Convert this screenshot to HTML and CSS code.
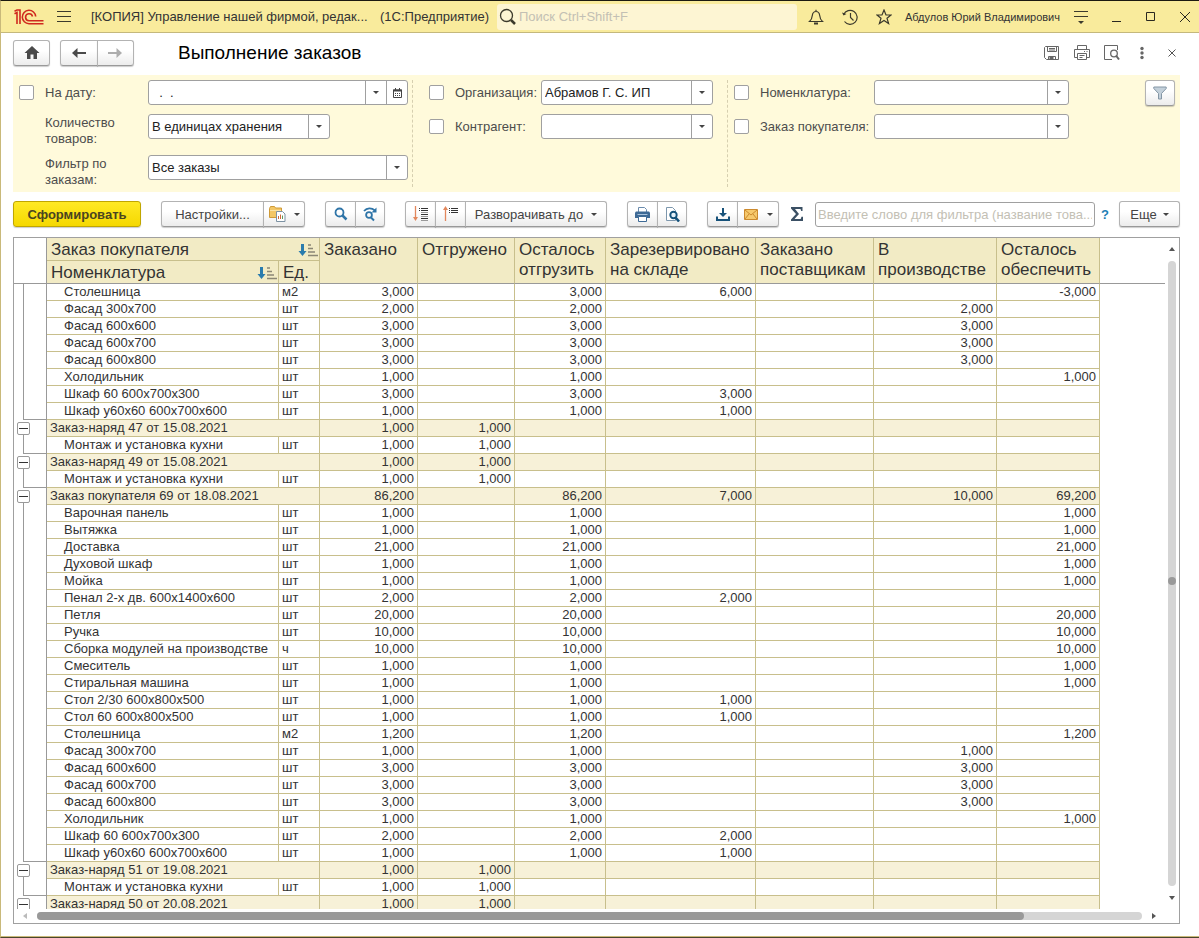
FILE: index.html
```html
<!DOCTYPE html>
<html lang="ru">
<head>
    <meta charset="UTF-8">
    <meta name="viewport" content="width=device-width, initial-scale=1.0">
    <title>Выполнение заказов</title>
    <link rel="stylesheet" href="styles.css">
</head>
<body>

    <header class="titlebar">
        <svg class="logo" width="30" height="16" viewBox="0 0 30 16" fill="none" stroke="#d0291e" stroke-width="1.600">
            <path d="M.5 4.800l2.500-1.300V15M.5 2.300L3 1h3v14"/>
            <path d="M21.700 7.500a6.700 6.700 0 1 0-6.700 7.200h14.500"/>
            <path d="M18.500 7.500a3.500 3.500 0 1 0-3.500 4.200h14.500"/>
        </svg>
        <button class="icon-btn menu-btn" aria-label="Меню">
            <svg width="14" height="12" viewBox="0 0 14 12" stroke="#3c3a2c"><path d="M0 .5h14M0 5.500h14M0 10.500h14"/></svg>
        </button>
        <span class="app-name">[КОПИЯ] Управление нашей фирмой, редак...</span>
        <span class="app-kind">(1С:Предприятие)</span>
        <label class="search">
            <svg width="18" height="18" viewBox="0 0 18 18" fill="none" stroke="#3c3a2c"><circle cx="7.500" cy="7.500" r="6" stroke-width="1.300"/><path d="M12 12l4 4" stroke-width="2.500"/></svg>
            <input type="text" placeholder="Поиск Ctrl+Shift+F" aria-label="Поиск">
        </label>
        <div class="title-icons">
            <button class="icon-btn" aria-label="Оповещения">
                <svg width="16" height="16" viewBox="0 0 16 16" fill="none" stroke="#3c3a2c" stroke-width="1.200"><path d="M1.500 12.500c2-1.500 2.500-3 2.800-6C4.600 4 6 2.500 8 2.500s3.400 1.500 3.700 4c.3 3 .8 4.500 2.800 6zM8 .8v1.700"/><path d="M6 14.500h4" stroke-width="2"/></svg>
            </button>
            <button class="icon-btn" aria-label="История">
                <svg width="16" height="16" viewBox="0 0 16 16" fill="none" stroke="#3c3a2c" stroke-width="1.200"><path d="M1.700 5.500A7 7 0 1 1 2.500 12.500"/><path d="M8.500 4v4.500l3 3"/><path d="M0 3.500l1.500 3 3-1.500z" fill="#3c3a2c" stroke="none"/></svg>
            </button>
            <button class="icon-btn" aria-label="Избранное">
                <svg width="16" height="16" viewBox="0 0 16 16" fill="none" stroke="#3c3a2c" stroke-width="1.200"><path d="M8 1l2 5h5l-4 3.300 1.600 5.200L8 11.500l-4.600 3L5 9.300 1 6h5z"/></svg>
            </button>
        </div>
        <span class="user">Абдулов Юрий Владимирович</span>
        <div class="window-icons">
            <button class="icon-btn" aria-label="Настройки окна">
                <svg width="14" height="14" viewBox="0 0 14 14" stroke="#3c3a2c"><path d="M0 1.500h14M0 6.500h14"/><path d="M4 11h6L7 14z" fill="#3c3a2c" stroke="none"/></svg>
            </button>
            <button class="icon-btn" aria-label="Свернуть">
                <svg width="10" height="10" viewBox="0 0 10 10" stroke="#2a2820"><path d="M0 9.500h9"/></svg>
            </button>
            <button class="icon-btn" aria-label="Развернуть">
                <svg width="10" height="10" viewBox="0 0 10 10" fill="none" stroke="#2a2820"><path d="M.5.5h8v8h-8z"/></svg>
            </button>
            <button class="icon-btn" aria-label="Закрыть">
                <svg width="10" height="10" viewBox="0 0 10 10" stroke="#2a2820"><path d="M0 0l10 10M10 0L0 10"/></svg>
            </button>
        </div>
    </header>

    <main class="page">
        <div class="page-head">
            <button class="btn home-btn" aria-label="Начальная страница">
                <svg width="16" height="14" viewBox="0 0 16 14" fill="#4a4a4a"><path d="M8 0l7.500 7H13v6H9.500V8.500h-3V13H3V7H.5z"/></svg>
            </button>
            <div class="btn-group nav-group">
                <button class="btn" aria-label="Назад"><svg width="14" height="10" viewBox="0 0 14 10"><path d="M5.500 0v10L0 5z" fill="#4a4a4a"/><path d="M2 5h12" stroke="#4a4a4a" stroke-width="2"/></svg></button>
                <button class="btn" aria-label="Вперед"><svg width="14" height="10" viewBox="0 0 14 10"><path d="M8.500 0v10L14 5z" fill="#adadad"/><path d="M0 5h12" stroke="#adadad" stroke-width="2"/></svg></button>
            </div>
            <h1>Выполнение заказов</h1>
            <div class="page-icons">
                <button class="icon-btn" aria-label="Сохранить">
                    <svg width="16" height="16" viewBox="0 0 16 16" fill="none" stroke="#666"><path d="M.5 2.500l1-1h13v13h-12l-2-2zM3.500 1.500v5h9v-5M5 3.500h6M5 5h6M4.500 14.500v-3h7v3"/><path d="M6 12h3v2.500H6z" fill="#666"/></svg>
                </button>
                <button class="icon-btn" aria-label="Печать">
                    <svg width="16" height="16" viewBox="0 0 16 16" fill="none" stroke="#666"><path d="M3.500 4V.5h9V4M3.500 12.500h-3v-8h15v8h-3M3.500 8.500h9v6h-9zM5.500 10.500h5M5.500 12.500h3M10 6.500h1M12.500 6.500h1"/></svg>
                </button>
                <button class="icon-btn" aria-label="Предварительный просмотр">
                    <svg width="16" height="16" viewBox="0 0 16 16" fill="none" stroke="#666"><path d="M13.500 5V.5H.500v14H8"/><circle cx="10" cy="8.500" r="3.300" stroke-width="1.300"/><path d="M12 10.500l3 4" stroke-width="2"/></svg>
                </button>
                <button class="icon-btn" aria-label="Дополнительно">
                    <svg width="16" height="16" viewBox="0 0 16 16" fill="#666"><circle cx="8" cy="3.500" r="1.700"/><circle cx="8" cy="8" r="1.700"/><circle cx="8" cy="12.500" r="1.700"/></svg>
                </button>
                <button class="icon-btn" aria-label="Закрыть форму">
                    <svg width="16" height="16" viewBox="0 0 16 16" stroke="#555"><path d="M4.500 4.500l7 7M11.500 4.500l-7 7"/></svg>
                </button>
            </div>
        </div>

        <section class="filters">
            <div class="filter-col col-date">
                <div class="filter-row">
                    <input type="checkbox" id="use-date">
                    <label for="use-date">На дату:</label>
                    <div class="field">
                        <input type="text" value="  .  ." aria-label="Дата">
                        <button class="pick" aria-label="Выбрать"><i class="caret"></i></button>
                        <button class="pick" aria-label="Календарь">
                            <svg width="9" height="10" viewBox="0 0 9 10"><path d="M.5 2h8v7.500h-8z" fill="#fff" stroke="#444"/><path d="M0 1.500h9v2H0zM2 0h1v2H2zM6 0h1v2H6z" fill="#444"/><path d="M2 5.500h5M2 7.500h5" stroke="#444" stroke-dasharray="1 1"/></svg>
                        </button>
                    </div>
                </div>
                <div class="filter-row no-check">
                    <label for="units">Количество товаров:</label>
                    <div class="field short">
                        <select id="units"><option>В единицах хранения</option></select>
                        <span class="pick"><i class="caret"></i></span>
                    </div>
                </div>
                <div class="filter-row no-check">
                    <label for="orders">Фильтр по заказам:</label>
                    <div class="field">
                        <select id="orders"><option>Все заказы</option></select>
                        <span class="pick"><i class="caret"></i></span>
                    </div>
                </div>
            </div>
            <div class="filter-col col-org">
                <div class="filter-row">
                    <input type="checkbox" id="use-org">
                    <label for="use-org">Организация:</label>
                    <div class="field">
                        <select aria-label="Организация"><option>Абрамов Г. С. ИП</option></select>
                        <span class="pick"><i class="caret"></i></span>
                    </div>
                </div>
                <div class="filter-row">
                    <input type="checkbox" id="use-partner">
                    <label for="use-partner">Контрагент:</label>
                    <div class="field">
                        <select aria-label="Контрагент"><option></option></select>
                        <span class="pick"><i class="caret"></i></span>
                    </div>
                </div>
            </div>
            <div class="filter-col col-item">
                <div class="filter-row">
                    <input type="checkbox" id="use-item">
                    <label for="use-item">Номенклатура:</label>
                    <div class="field">
                        <select aria-label="Номенклатура"><option></option></select>
                        <span class="pick"><i class="caret"></i></span>
                    </div>
                </div>
                <div class="filter-row">
                    <input type="checkbox" id="use-order">
                    <label for="use-order">Заказ покупателя:</label>
                    <div class="field">
                        <select aria-label="Заказ покупателя"><option></option></select>
                        <span class="pick"><i class="caret"></i></span>
                    </div>
                </div>
            </div>
            <button class="btn funnel-btn" aria-label="Отбор">
                <svg width="14" height="14" viewBox="0 0 14 14"><path d="M.8 1h12.400v1.500L8.500 7.500v5.500h-3V7.500L.8 2.500z" fill="#c3d0da" stroke="#8496a5"/></svg>
            </button>
        </section>

        <div class="toolbar">
            <button class="btn primary">Сформировать</button>
            <div class="btn-group">
                <button class="btn settings-btn">Настройки...</button>
                <button class="btn variant-btn" aria-label="Варианты отчета">
                    <svg width="17" height="16" viewBox="0 0 17 16"><path d="M.5 2.500l1-2h4l1 1.500h6v9.500H.500z" fill="#f3c766" stroke="#cf9a37"/><path d="M1 4.500h11" stroke="#fae3a6"/><path d="M7.500 5.500h6l2.500 2.500v7.500H7.500z" fill="#fff" stroke="#7d92a3"/><path d="M9.500 13V10M11.500 13V8.500" stroke="#d0683c"/><path d="M13.500 13V9.500" stroke="#5f9a5b"/></svg>
                    <i class="caret"></i>
                </button>
            </div>
            <div class="btn-group">
                <button class="btn sq" aria-label="Найти"><svg width="14" height="14" viewBox="0 0 14 14" fill="none" stroke="#2f75a8"><circle cx="5.500" cy="5.500" r="4" stroke-width="1.800"/><path d="M8.500 8.500l4 4" stroke-width="2.500"/></svg></button>
                <button class="btn sq" aria-label="Найти далее"><svg width="15" height="15" viewBox="0 0 15 15" fill="none" stroke="#2f75a8"><path d="M1 4c3-3.500 7.500-3.500 11-.5" stroke-width="1.800"/><path d="M13.500.5v5h-5z" fill="#2f75a8" stroke="none"/><circle cx="6" cy="8" r="2.900" stroke-width="1.800"/><path d="M8 10.500l3 3" stroke-width="2"/></svg></button>
            </div>
            <div class="btn-group">
                <button class="btn sq" aria-label="Развернуть все"><svg width="16" height="16" viewBox="0 0 16 16" fill="none"><path d="M2.500 0v13" stroke="#e2875c" stroke-width="1.300"/><path d="M0 11h5l-2.500 4z" fill="#e2875c"/><path d="M6 2.500h1M8 2.500h7M6 4.500h1M8 4.500h7M8 8.500h7M8 12.500h7" stroke="#333"/><path d="M8 6.500h7M8 10.500h7M8 14.500h7" stroke="#999"/></svg></button>
                <button class="btn sq" aria-label="Свернуть все"><svg width="16" height="16" viewBox="0 0 16 16" fill="none"><path d="M2.500 2v13" stroke="#e2875c" stroke-width="1.300"/><path d="M0 4h5L2.500 0z" fill="#e2875c"/><path d="M6 2.500h1M8 2.500h7M6 4.500h1M8 4.500h7M6 6.500h1M8 6.500h7" stroke="#333"/></svg></button>
                <button class="btn expand-btn">Разворачивать до <i class="caret"></i></button>
            </div>
            <div class="btn-group">
                <button class="btn sq" aria-label="Печать отчета"><svg width="15" height="15" viewBox="0 0 15 15"><path d="M3.500 5V.5h6l2 2V5" fill="#fff" stroke="#6a8bad"/><path d="M1 4.500h13l1 1V11H0V5.500z" fill="#3e6a96"/><path d="M2.500 7.500h10" stroke="#a8c3dc"/><path d="M3.500 9.500h8v5h-8z" fill="#fff" stroke="#3e6a96"/></svg></button>
                <button class="btn sq" aria-label="Просмотр"><svg width="15" height="15" viewBox="0 0 15 15" fill="none"><path d="M1.500.5h6l3 3v10h-9z" fill="#fff" stroke="#7d97ad"/><circle cx="8.500" cy="8" r="3.200" fill="#e4f0f8" stroke="#13517a" stroke-width="1.900"/><path d="M10.500 10.500l3.500 4" stroke="#13517a" stroke-width="2.500"/></svg></button>
            </div>
            <div class="btn-group">
                <button class="btn sq" aria-label="Сохранить отчет"><svg width="14" height="13" viewBox="0 0 14 13"><path d="M6 0h2v5h3L7 9 3 5h3z" fill="#17527a"/><path d="M1 8.500V12h12V8.500" fill="none" stroke="#17527a" stroke-width="2"/></svg></button>
                <button class="btn mail-btn" aria-label="Отправить"><svg width="14" height="11" viewBox="0 0 14 11"><path d="M.5.5h13v10H.500z" fill="#f6c96c" stroke="#cc8a2e"/><path d="M1 1l6 5 6-5M1 10l4-5M13 10L9 5" fill="none" stroke="#cc8a2e"/></svg><i class="caret"></i></button>
            </div>
            <button class="icon-btn sum-btn" aria-label="Сумма"><svg width="12" height="14" viewBox="0 0 12 14"><path d="M0 0h11.500v4h-1.300l-.7-2H4l4 5-4.500 5h6.200l.8-2.200H12V14H0v-1.500L5 7 0 1.500z" fill="#3b5064"/></svg></button>
            <input class="word-filter" type="text" placeholder="Введите слово для фильтра (название това..." aria-label="Слово для фильтра">
            <a class="help" href="#">?</a>
            <button class="btn more-btn">Еще <i class="caret"></i></button>
        </div>

        <section class="report">
            <div class="report-body">
                <div class="sheet">
                    <table>
                        <colgroup>
                            <col class="c-tree"><col class="c-name"><col class="c-unit"><col class="c-ordered"><col class="c-shipped">
                            <col class="c-left"><col class="c-reserved"><col class="c-supplier"><col class="c-production"><col class="c-provide"><col>
                        </colgroup>
                        <thead>
                            <tr>
                                <th class="blank tree" rowspan="2"></th>
                                <th class="top" colspan="2"><div class="sort-head">Заказ покупателя <svg class="sort" width="20" height="14" viewBox="0 0 20 14"><path d="M3 1h3v7h2.500l-4 5-4-5H3z" fill="#2b7cad"/><path d="M10 2h3M10 5.500h5M10 9h7M10 12.500h10" stroke="#8b8775" stroke-width="1.500"/></svg></div></th>
                                <th rowspan="2">Заказано</th>
                                <th rowspan="2">Отгружено</th>
                                <th rowspan="2">Осталось отгрузить</th>
                                <th rowspan="2">Зарезервировано на складе</th>
                                <th rowspan="2">Заказано поставщикам</th>
                                <th rowspan="2">В производстве</th>
                                <th rowspan="2">Осталось обеспечить</th>
                                <th class="blank" rowspan="2"></th>
                            </tr>
                            <tr>
                                <th><div class="sort-head">Номенклатура <svg class="sort" width="20" height="14" viewBox="0 0 20 14"><path d="M3 1h3v7h2.500l-4 5-4-5H3z" fill="#2b7cad"/><path d="M10 2h3M10 5.500h5M10 9h7M10 12.500h10" stroke="#8b8775" stroke-width="1.500"/></svg></div></th>
                                <th>Ед.</th>
                            </tr>
                        </thead>
                        <tbody id="rows"></tbody>
                    </table>
                </div>
                <div class="vscroll">
                    <i class="arrow up"></i>
                    <div class="track"><div class="thumb"></div></div>
                    <i class="arrow down"></i>
                </div>
            </div>
            <div class="hscroll">
                <i class="arrow left"></i>
                <div class="track"><div class="thumb"></div></div>
                <i class="arrow right"></i>
            </div>
        </section>
    </main>

    <script src="script.js"></script>
</body>
</html>
```
FILE: styles.css
```css
* {
    box-sizing: border-box;
}

body {
    margin: 0;
    height: 100vh;
    display: flex;
    flex-direction: column;
    font-family: "Liberation Sans", Arial, sans-serif;
    font-size: 13px;
    color: #333;
    background: #fff;
    border-top: 1px solid #1c1a10;
    border-left: 1px solid #c9b97a;
    border-bottom: 1px solid #4a452c;
    overflow: hidden;
}

button, input, select {
    font: inherit;
    color: inherit;
}

.icon-btn {
    display: flex;
    align-items: center;
    justify-content: center;
    padding: 0;
    border: none;
    background: none;
}

/* Title bar */
.titlebar {
    display: flex;
    align-items: center;
    height: 32px;
    flex: none;
    padding: 0 9px 0 13px;
    background: #f9eb9c;
    border-bottom: 1px solid #c4b87c;
    white-space: nowrap;
}

.menu-btn {
    margin: 0 20px 0 13px;
}

.app-name {
    width: 289px;
}

.app-kind {
    width: 117px;
}

.search {
    display: flex;
    align-items: center;
    gap: 2px;
    flex: 0 1 300px;
    height: 26px;
    padding: 0 2px;
    background: #fdf5d3;
    border-radius: 3px;
}

.search input {
    flex: 1;
    min-width: 0;
    padding: 0;
    border: none;
    background: none;
}

::placeholder {
    color: #c3c0b4;
    opacity: 1;
}

.title-icons {
    display: flex;
    gap: 18px;
    margin-left: auto;
}

.user {
    font-size: 11px;
    margin: 0 14px 0 13px;
}

.window-icons {
    display: flex;
    align-items: center;
    gap: 24px;
}

/* Page header */
.page {
    flex: 1;
    min-height: 0;
    display: flex;
    flex-direction: column;
    padding: 0 19px 12px 12px;
    border-bottom: 1px solid #c9b97a;
}

.page-head {
    display: flex;
    align-items: center;
    height: 42px;
    flex: none;
    padding-bottom: 2px;
}

.btn {
    display: flex;
    align-items: center;
    justify-content: center;
    height: 26px;
    padding: 0;
    border: 1px solid #b3b3b3;
    border-bottom-color: #999;
    border-radius: 3px;
    background: linear-gradient(#fff 40%, #ececec);
    box-shadow: 0 1px 1px rgba(0, 0, 0, 0.2);
    color: #444;
    white-space: nowrap;
}

.btn-group {
    display: flex;
}

.btn-group .btn + .btn {
    margin-left: -1px;
    border-top-left-radius: 0;
    border-bottom-left-radius: 0;
}

.btn-group .btn:not(:last-child) {
    border-top-right-radius: 0;
    border-bottom-right-radius: 0;
}

.home-btn {
    width: 37px;
    margin-right: 10px;
}

.nav-group {
    width: 74px;
}

.nav-group .btn {
    flex: 1;
}

h1 {
    margin: 0 0 0 44px;
    font-size: 19px;
    font-weight: normal;
    color: #000;
}

.page-icons {
    display: flex;
    gap: 14px;
    margin-left: auto;
}

/* Filters */
.filters {
    display: flex;
    flex: none;
    padding: 5px 5px 5px 6px;
    background: #fffadb;
    color: #4d4d4d;
}

.filter-col {
    display: flex;
    flex-direction: column;
    gap: 9px;
    min-height: 107px;
}

.col-date {
    width: 394px;
    padding-right: 4px;
    border-right: 1px dashed #d6cfb0;
}

.col-org {
    width: 315px;
    padding: 0 14px 0 16px;
    border-right: 1px dashed #d6cfb0;
}

.col-item {
    width: 341px;
    padding-left: 6px;
}

.filter-row {
    display: flex;
    align-items: center;
    height: 25px;
}

.filter-row input[type="checkbox"] {
    appearance: none;
    flex: none;
    width: 15px;
    height: 15px;
    margin: 0 11px 0 0;
    border: 1px solid #a0a0a0;
    border-radius: 2px;
    background: #fff;
}

.filter-row label {
    flex: none;
    width: 103px;
    line-height: 16px;
}

.filter-row.no-check {
    align-items: flex-start;
    height: 32px;
    padding-left: 26px;
}

.no-check label {
    padding-top: 1px;
}

.col-org label {
    width: 86px;
}

.col-item label {
    width: 114px;
}

.field {
    display: flex;
    flex: 1;
    min-width: 0;
    height: 25px;
    border: 1px solid #a0a0a0;
    border-radius: 3px;
    background: #fff;
    overflow: hidden;
}

.field.short {
    flex: 0 0 182px;
}

.field input, .field select {
    appearance: none;
    flex: 1;
    min-width: 0;
    padding: 0 3px;
    border: none;
    background: none;
    color: #222;
}

.pick {
    display: flex;
    align-items: center;
    justify-content: center;
    width: 21px;
    padding: 0;
    border: none;
    border-left: 1px solid #a0a0a0;
    background: none;
}

.caret {
    border: 3px solid transparent;
    border-top-color: #444;
    border-bottom: none;
}

.col-item .filter-row {
    width: 335px;
}

.funnel-btn {
    width: 30px;
    margin-left: auto;
}

/* Toolbar */
.toolbar {
    display: flex;
    align-items: center;
    flex: none;
    gap: 20px;
    padding: 9px 0 10px;
}

.btn.primary {
    width: 128px;
    font-weight: bold;
    color: #4a4420;
    border-color: #c0a600;
    background: linear-gradient(#ffe924, #f5d800);
}

.settings-btn {
    width: 103px;
}

.variant-btn {
    width: 42px;
    gap: 8px;
}

.sq {
    width: 31px;
}

.sq:last-child {
    width: 30px;
}

.expand-btn {
    width: 142px;
    gap: 8px;
}

.mail-btn {
    width: 42px;
    gap: 9px;
}

.sum-btn {
    margin: 0 -8px;
}

.word-filter {
    flex: 1;
    min-width: 0;
    height: 25px;
    padding: 0 2px;
    border: 1px solid #a0a0a0;
    border-radius: 3px;
}

.help {
    margin: 0 -10px 0 -14px;
    font-weight: bold;
    color: #1f7fb5;
    text-decoration: none;
}

.more-btn {
    width: 61px;
    gap: 6px;
}

/* Report */
.report {
    flex: 1;
    min-height: 0;
    display: flex;
    flex-direction: column;
    border: 1px solid #a0a0a0;
}

.report-body {
    flex: 1;
    min-height: 0;
    display: flex;
}

.sheet {
    flex: 1;
    min-width: 0;
    overflow: hidden;
}

table {
    width: 100%;
    table-layout: fixed;
    border-collapse: separate;
    border-spacing: 0;
}

.c-tree { width: 33px; }
.c-name { width: 232px; }
.c-unit { width: 41px; }
.c-ordered { width: 98px; }
.c-shipped { width: 97px; }
.c-left { width: 91px; }
.c-reserved { width: 150px; }
.c-supplier { width: 118px; }
.c-production { width: 123px; }
.c-provide { width: 103px; }

th {
    height: 23px;
    padding: 2px 4px 0;
    background: #f2ebc5;
    border-right: 1px solid #c8bf8c;
    border-bottom: 1px solid #999;
    font-size: 17px;
    font-weight: normal;
    line-height: 20px;
    text-align: left;
    vertical-align: top;
}

th.top {
    border-bottom-color: #c8bf8c;
}

th.blank {
    background: #fff;
    border-right: none;
}

th.tree, td.tree {
    border-right: 1px solid #999;
}

.sort-head {
    display: flex;
    align-items: center;
    justify-content: space-between;
    margin-right: -3px;
}

td {
    height: 17px;
    padding: 0 3px;
    border-right: 1px solid #c8bf8c;
    border-bottom: 1px solid #c8bf8c;
    line-height: 16px;
    white-space: nowrap;
}

td.name {
    padding-left: 17px;
}

td.num {
    text-align: right;
}

.group td {
    background: #f7f1d8;
}

.group td.name {
    padding-left: 3px;
}

td.rest, .group td.rest {
    border: none;
    background: none;
}

/* Outline lines of the grouping */
td.tree {
    padding: 0;
    border-right: 1px solid #999;
    border-bottom: none;
    background: linear-gradient(#999, #999) 9px 0 / 1px 100% no-repeat;
}

.last td.tree {
    background: linear-gradient(#999, #999) 9px 0 / 1px 100% no-repeat,
                linear-gradient(#999, #999) 9px 100% / 24px 1px no-repeat;
}

.group td.tree {
    background: linear-gradient(#999, #999) 9px 100% / 1px 8px no-repeat;
}

.toggle {
    display: flex;
    align-items: center;
    justify-content: center;
    width: 13px;
    height: 13px;
    margin-left: 3px;
    padding: 0;
    border: 1px solid #999;
    border-radius: 2px;
    background: #fff;
}

.toggle i {
    width: 9px;
    height: 1px;
    background: #333;
}

/* Scroll bars */
.vscroll {
    display: flex;
    flex-direction: column;
    align-items: center;
    gap: 10px;
    width: 14px;
    padding: 9px 0;
}

.hscroll {
    display: flex;
    align-items: center;
    gap: 10px;
    height: 14px;
    flex: none;
    padding: 0 23px 0 9px;
}

.track {
    display: flex;
    flex: 1;
    border-radius: 4px;
    background: #d5d5d5;
}

.vscroll .track {
    width: 8px;
    flex-direction: column;
    justify-content: center;
}

.hscroll .track {
    height: 8px;
}

.thumb {
    border-radius: 4px;
    background: #999;
}

.vscroll .thumb {
    height: 8px;
    margin-top: 14px;
}

.hscroll .thumb {
    width: 89.3%;
}

.arrow {
    border: 3px solid transparent;
}

.arrow.up {
    border-top: none;
    border-bottom: 4px solid #555;
}

.arrow.down {
    border-bottom: none;
    border-top: 4px solid #555;
}

.arrow.left {
    border-left: none;
    border-right: 4px solid #bbb;
}

.arrow.right {
    border-right: none;
    border-left: 4px solid #555;
}
```
FILE: script.js
```js
// name, unit (empty for an order), ordered, shipped, left to ship, reserved, from suppliers, in production, to provide
const data = [
    ["Столешница", "м2", "3,000", "", "3,000", "6,000", "", "", "-3,000"],
    ["Фасад 300х700", "шт", "2,000", "", "2,000", "", "", "2,000", ""],
    ["Фасад 600х600", "шт", "3,000", "", "3,000", "", "", "3,000", ""],
    ["Фасад 600х700", "шт", "3,000", "", "3,000", "", "", "3,000", ""],
    ["Фасад 600х800", "шт", "3,000", "", "3,000", "", "", "3,000", ""],
    ["Холодильник", "шт", "1,000", "", "1,000", "", "", "", "1,000"],
    ["Шкаф 60 600х700х300", "шт", "3,000", "", "3,000", "3,000", "", "", ""],
    ["Шкаф у60х60 600х700х600", "шт", "1,000", "", "1,000", "1,000", "", "", ""],
    ["Заказ-наряд 47 от 15.08.2021", "", "1,000", "1,000", "", "", "", "", ""],
    ["Монтаж и установка кухни", "шт", "1,000", "1,000", "", "", "", "", ""],
    ["Заказ-наряд 49 от 15.08.2021", "", "1,000", "1,000", "", "", "", "", ""],
    ["Монтаж и установка кухни", "шт", "1,000", "1,000", "", "", "", "", ""],
    ["Заказ покупателя 69 от 18.08.2021", "", "86,200", "", "86,200", "7,000", "", "10,000", "69,200"],
    ["Варочная панель", "шт", "1,000", "", "1,000", "", "", "", "1,000"],
    ["Вытяжка", "шт", "1,000", "", "1,000", "", "", "", "1,000"],
    ["Доставка", "шт", "21,000", "", "21,000", "", "", "", "21,000"],
    ["Духовой шкаф", "шт", "1,000", "", "1,000", "", "", "", "1,000"],
    ["Мойка", "шт", "1,000", "", "1,000", "", "", "", "1,000"],
    ["Пенал 2-х дв. 600х1400х600", "шт", "2,000", "", "2,000", "2,000", "", "", ""],
    ["Петля", "шт", "20,000", "", "20,000", "", "", "", "20,000"],
    ["Ручка", "шт", "10,000", "", "10,000", "", "", "", "10,000"],
    ["Сборка модулей на производстве", "ч", "10,000", "", "10,000", "", "", "", "10,000"],
    ["Смеситель", "шт", "1,000", "", "1,000", "", "", "", "1,000"],
    ["Стиральная машина", "шт", "1,000", "", "1,000", "", "", "", "1,000"],
    ["Стол 2/30 600х800х500", "шт", "1,000", "", "1,000", "1,000", "", "", ""],
    ["Стол 60 600х800х500", "шт", "1,000", "", "1,000", "1,000", "", "", ""],
    ["Столешница", "м2", "1,200", "", "1,200", "", "", "", "1,200"],
    ["Фасад 300х700", "шт", "1,000", "", "1,000", "", "", "1,000", ""],
    ["Фасад 600х600", "шт", "3,000", "", "3,000", "", "", "3,000", ""],
    ["Фасад 600х700", "шт", "3,000", "", "3,000", "", "", "3,000", ""],
    ["Фасад 600х800", "шт", "3,000", "", "3,000", "", "", "3,000", ""],
    ["Холодильник", "шт", "1,000", "", "1,000", "", "", "", "1,000"],
    ["Шкаф 60 600х700х300", "шт", "2,000", "", "2,000", "2,000", "", "", ""],
    ["Шкаф у60х60 600х700х600", "шт", "1,000", "", "1,000", "1,000", "", "", ""],
    ["Заказ-наряд 51 от 19.08.2021", "", "1,000", "1,000", "", "", "", "", ""],
    ["Монтаж и установка кухни", "шт", "1,000", "1,000", "", "", "", "", ""],
    ["Заказ-наряд 50 от 20.08.2021", "", "1,000", "1,000", "", "", "", "", ""]
];

let html = "";
data.forEach((row, i) => {
    const [name, unit, ...nums] = row;
    const isGroup = unit === "";
    const isLast = !isGroup && data[i + 1] && data[i + 1][1] === "";

    html += `<tr class="${isGroup ? "group" : isLast ? "last" : ""}">`;
    html += `<td class="tree">${isGroup ? '<button class="toggle" aria-label="Свернуть группу"><i></i></button>' : ""}</td>`;
    html += isGroup
        ? `<td class="name" colspan="2">${name}</td>`
        : `<td class="name">${name}</td><td>${unit}</td>`;
    html += nums.map(n => `<td class="num">${n}</td>`).join("");
    html += `<td class="rest"></td></tr>`;
});
document.getElementById("rows").innerHTML = html;

// collapse and expand the rows of an order
document.querySelectorAll(".toggle").forEach(btn => {
    btn.addEventListener("click", () => {
        let next = btn.closest("tr").nextElementSibling;
        while (next && !next.classList.contains("group")) {
            next.hidden = !next.hidden;
            next = next.nextElementSibling;
        }
    });
});
```
